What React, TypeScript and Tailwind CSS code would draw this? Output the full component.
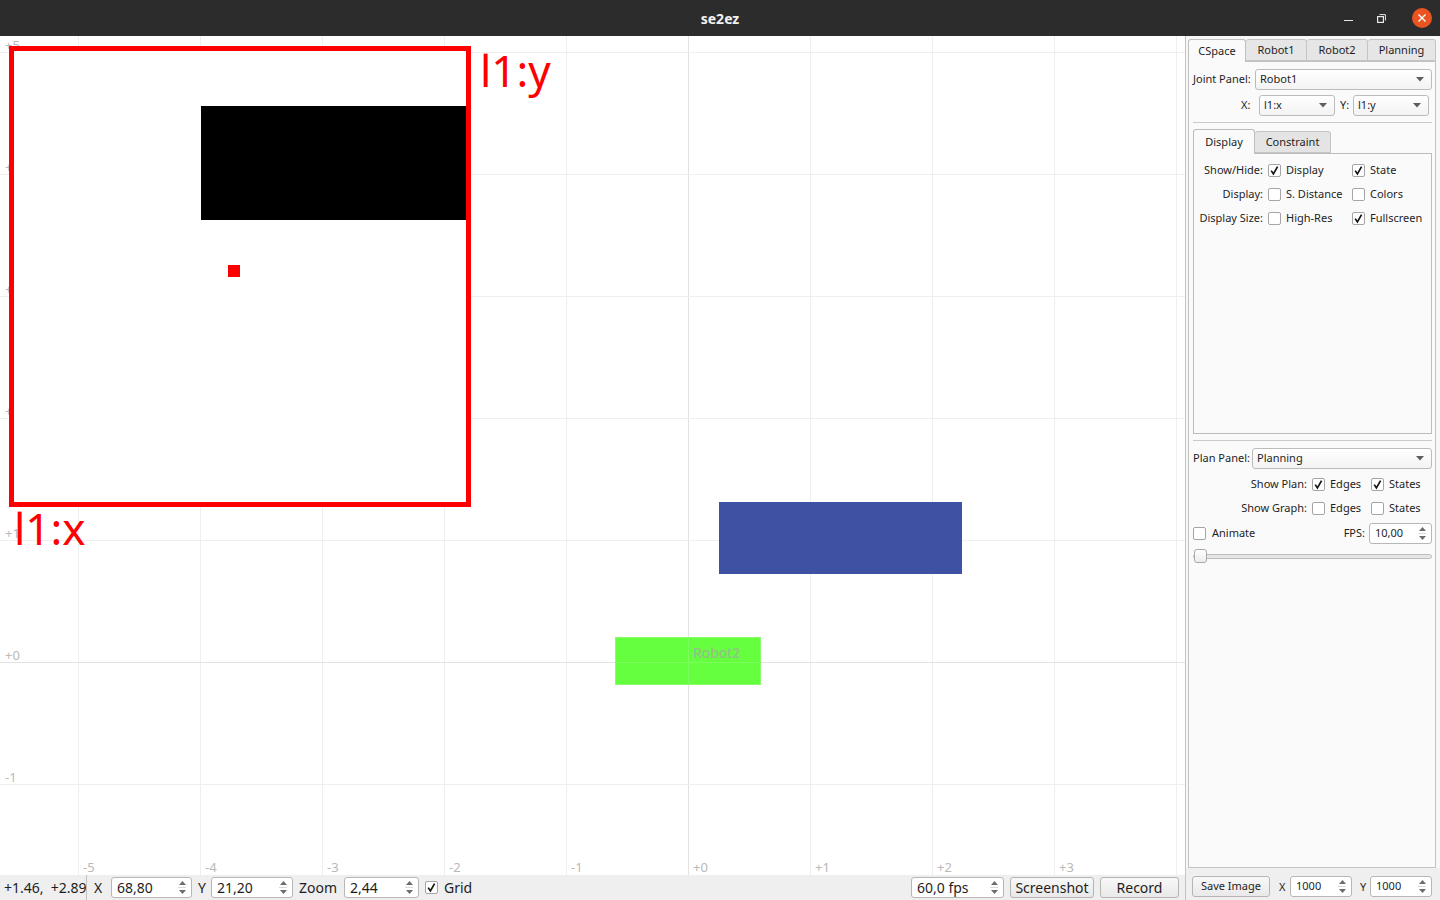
import React from "react";

function Check({ on }: { on?: boolean }) {
  return (
    <span className="flex h-[13px] w-[13px] shrink-0 items-center justify-center rounded-[2px] border border-[#a5a5a5] bg-white">
      {on && (
        <svg width="11" height="11" viewBox="0 0 11 11">
          <path d="M2.2 5.6 L4.4 8.9 L8.6 1.6" fill="none" stroke="#151515" strokeWidth="1.7" />
        </svg>
      )}
    </span>
  );
}

function Arrow() {
  return (
    <svg width="8" height="5" viewBox="0 0 8 5">
      <path d="M0 0 L8 0 L4 4.5 Z" fill="#5e5e5e" />
    </svg>
  );
}

function Combo({ text, cls }: { text: string; cls: string }) {
  return (
    <div className={`${cls} flex h-[21px] items-center justify-between rounded-[3px] border border-[#bcbcbc] bg-linear-to-b from-[#ffffff] to-[#f3f3f3] pl-[4px] pr-[7px] text-[11px] text-[#1e1e1e]`}>
      <span>{text}</span>
      <Arrow />
    </div>
  );
}

function SpinArrows() {
  return (
    <span className="flex h-full w-[14px] shrink-0 flex-col items-center justify-center gap-[2px]">
      <svg width="7" height="4" viewBox="0 0 7 4">
        <path d="M0 4 L7 4 L3.5 0 Z" fill="#6c6c6c" />
      </svg>
      <span className="h-px w-[8px] bg-[#d9d9d9]" />
      <svg width="7" height="4" viewBox="0 0 7 4">
        <path d="M0 0 L7 0 L3.5 4 Z" fill="#6c6c6c" />
      </svg>
    </span>
  );
}

function Spin({ text, cls, textCls }: { text: string; cls: string; textCls: string }) {
  return (
    <div className={`${cls} flex h-[21px] shrink-0 items-center rounded-[3px] border border-[#b7b7b7] bg-white pr-[2px]`}>
      <span className={`flex-1 pl-[5px] ${textCls}`}>{text}</span>
      <SpinArrows />
    </div>
  );
}

function Btn({ text, cls }: { text: string; cls: string }) {
  return (
    <div className={`${cls} flex h-[21px] shrink-0 items-center justify-center rounded-[3px] border border-[#b5b5b5] bg-linear-to-b from-[#f8f8f8] to-[#e9e9e9]`}>
      {text}
    </div>
  );
}

function Plot() {
  const vx = [78, 200, 322, 444, 566, 688, 810, 932, 1054, 1176];
  const hy = [16, 138, 260, 382, 504, 626, 748];
  const vl = ["+5", "+4", "+3", "+2", "+1", "+0", "-1"];
  const bl = ["-5", "-4", "-3", "-2", "-1", "+0", "+1", "+2", "+3"];
  return (
    <svg width="1185" height="839" viewBox="0 0 1185 839" className="block">
      <rect x="0" y="0" width="1185" height="839" fill="#ffffff" />
      {vx.map((x) => (
        <line key={"v" + x} x1={x + 0.5} y1="0" x2={x + 0.5} y2="839" stroke={x === 688 ? "#e2e2e2" : "#efefef"} strokeWidth="1" />
      ))}
      {hy.map((y) => (
        <line key={"h" + y} x1="0" y1={y + 0.5} x2="1185" y2={y + 0.5} stroke={y === 626 ? "#e2e2e2" : "#efefef"} strokeWidth="1" />
      ))}
      <g fontFamily="Noto Sans, sans-serif" fontSize="13" fill="#b9b9b9">
        {hy.map((y, i) => (
          <text key={"vl" + y} x="5" y={y - 2}>
            {vl[i]}
          </text>
        ))}
        {bl.map((t, i) => (
          <text key={"bl" + t} x={vx[i] + 5} y="836">
            {t}
          </text>
        ))}
      </g>
      <rect x="719" y="466" width="243" height="72" fill="#3f51a3" />
      <rect x="615.5" y="601.5" width="145" height="47" fill="#66ff3f" stroke="#86ff6a" strokeWidth="1" />
      <line x1="615" y1="626.5" x2="761" y2="626.5" stroke="#7cff5c" strokeWidth="1" />
      <line x1="688.5" y1="601" x2="688.5" y2="649" stroke="#7cff5c" strokeWidth="1" />
      <g fontFamily="Noto Sans, sans-serif" fontSize="14" fill="#a8a8a8" opacity="0.75">
        <text x="693" y="622">Robot2</text>
        <text x="693" y="622" opacity="0.45">Robot1</text>
      </g>
      <rect x="11.5" y="12.5" width="457" height="456" fill="#ffffff" stroke="#ff0000" strokeWidth="5" />
      <rect x="201" y="70" width="265" height="114" fill="#000000" />
      <rect x="228" y="229" width="12" height="12" fill="#ff0000" />
      <g fontFamily="Noto Sans, sans-serif" fontSize="44" fill="#ff0000">
        <text x="480" y="51">l1:y</text>
        <text x="14" y="509">l1:x</text>
      </g>
    </svg>
  );
}

export default function App() {
  return (
    <div className="flex h-[900px] w-[1440px] flex-col overflow-hidden bg-white font-['Noto_Sans',sans-serif] text-[#1e1e1e]">
      {/* title bar */}
      <div className="relative flex h-[36px] shrink-0 items-center justify-center bg-[#2c2c2c]">
        <span className="text-[14px] font-bold text-[#f2f2f2]">se2ez</span>
        <div className="absolute right-[8px] top-0 flex h-[36px] items-center">
          <span className="mr-[24px] mt-[5px] h-[1.5px] w-[9px] bg-[#e8e8e8]" />
          <svg width="9" height="9" viewBox="0 0 9 9" className="mr-[26px]">
            <rect x="0.6" y="2.6" width="5.8" height="5.8" fill="none" stroke="#e8e8e8" strokeWidth="1.2" />
            <path d="M2.5 0.6 H8.4 V6.5" fill="none" stroke="#e8e8e8" strokeWidth="1" />
          </svg>
          <span className="flex h-[20px] w-[20px] items-center justify-center rounded-full bg-[#e95420]">
            <svg width="10" height="10" viewBox="0 0 10 10">
              <path d="M1.5 1.5 L8.5 8.5 M8.5 1.5 L1.5 8.5" stroke="#ffffff" strokeWidth="1.4" />
            </svg>
          </span>
        </div>
      </div>

      <div className="flex min-h-0 flex-1">
        {/* left: canvas + bottom bar */}
        <div className="flex w-[1185px] shrink-0 flex-col">
          <div className="h-[839px] shrink-0 overflow-hidden">
            <Plot />
          </div>
          <div className="flex h-[25px] shrink-0 items-center bg-[#efefef] text-[14px]">
            <div className="w-[86px] overflow-hidden whitespace-pre pl-[4px]">+1.46,  +2.89</div>
            <span className="h-[25px] w-px bg-[#c2c2c2]" />
            <span className="ml-[7px] w-[17px]">X</span>
            <Spin text="68,80" cls="w-[81px]" textCls="text-[14px]" />
            <span className="ml-[6px] w-[13px]">Y</span>
            <Spin text="21,20" cls="w-[82px]" textCls="text-[14px]" />
            <span className="ml-[6px] w-[45px]">Zoom</span>
            <Spin text="2,44" cls="w-[75px]" textCls="text-[14px]" />
            <span className="ml-[6px]">
              <Check on />
            </span>
            <span className="ml-[6px]">Grid</span>
            <div className="ml-auto flex items-center gap-[6px] pr-[6px]">
              <Spin text="60,0 fps" cls="w-[93px]" textCls="text-[14px]" />
              <Btn text="Screenshot" cls="w-[84px] text-[14px]" />
              <Btn text="Record" cls="w-[79px] text-[14px]" />
            </div>
          </div>
        </div>

        {/* right panel */}
        <div className="flex w-[255px] shrink-0 flex-col border-l border-[#c3c3c3] bg-[#efefef] text-[11px]">
          <div className="flex flex-1 flex-col bg-[#f7f7f7] pl-[2px] pr-[4px] pt-[3px]">
            <div className="flex items-end">
              <div className="z-10 -mb-px flex h-[23px] w-[58px] items-center justify-center rounded-t-[3px] border border-b-0 border-[#bfbfbf] bg-[#fafafa]">CSpace</div>
              <div className="flex h-[22px] w-[61px] items-center justify-center rounded-t-[3px] border border-l-0 border-[#c4c4c4] bg-[#e6e6e6]">Robot1</div>
              <div className="flex h-[22px] w-[61px] items-center justify-center rounded-t-[3px] border border-l-0 border-[#c4c4c4] bg-[#e6e6e6]">Robot2</div>
              <div className="flex h-[22px] w-[68px] items-center justify-center rounded-t-[3px] border border-l-0 border-[#c4c4c4] bg-[#e6e6e6]">Planning</div>
            </div>
            <div className="flex flex-1 flex-col border border-[#c2c2c2] bg-[#fafafa] pl-[4px] pr-[3px] pt-[7px]">
              <div className="flex h-[21px] items-center">
                <span className="w-[62px]">Joint Panel:</span>
                <Combo text="Robot1" cls="flex-1" />
              </div>
              <div className="mt-[5px] flex h-[21px] items-center">
                <span className="ml-[48px] w-[18px]">X:</span>
                <Combo text="l1:x" cls="w-[76px]" />
                <span className="ml-[5px] w-[13px]">Y:</span>
                <Combo text="l1:y" cls="w-[76px]" />
              </div>
              <div className="mt-[6px] h-px bg-[#cacaca]" />
              <div className="mt-[6px] flex items-end">
                <div className="z-10 -mb-px flex h-[25px] w-[62px] items-center justify-center rounded-t-[3px] border border-b-0 border-[#bdbdbd] bg-[#fafafa]">Display</div>
                <div className="flex h-[22px] w-[76px] items-center justify-center rounded-t-[3px] border border-l-0 border-[#c4c4c4] bg-[#e4e4e4]">Constraint</div>
              </div>
              <div className="flex h-[281px] flex-col border border-[#bdbdbd] bg-[#fafafa] pt-[4px]">
                {[
                  ["Show/Hide:", true, "Display", true, "State"],
                  ["Display:", false, "S. Distance", false, "Colors"],
                  ["Display Size:", false, "High-Res", true, "Fullscreen"],
                ].map((r) => (
                  <div key={r[0] as string} className="flex h-[24px] items-center">
                    <span className="w-[69px] text-right">{r[0] as string}</span>
                    <div className="ml-[5px] flex w-[84px] items-center">
                      <Check on={r[1] as boolean} />
                      <span className="ml-[5px]">{r[2] as string}</span>
                    </div>
                    <Check on={r[3] as boolean} />
                    <span className="ml-[5px]">{r[4] as string}</span>
                  </div>
                ))}
              </div>
              <div className="mt-[6px] h-px bg-[#cacaca]" />
              <div className="mt-[7px] flex h-[21px] items-center">
                <span className="w-[59px]">Plan Panel:</span>
                <Combo text="Planning" cls="flex-1" />
              </div>
              {[
                ["Show Plan:", true, true],
                ["Show Graph:", false, false],
              ].map((r, i) => (
                <div key={r[0] as string} className={`${i === 0 ? "mt-[3px]" : ""} flex h-[24px] items-center`}>
                  <span className="w-[114px] text-right">{r[0] as string}</span>
                  <div className="ml-[5px] flex w-[59px] items-center">
                    <Check on={r[1] as boolean} />
                    <span className="ml-[5px]">Edges</span>
                  </div>
                  <Check on={r[2] as boolean} />
                  <span className="ml-[5px]">States</span>
                </div>
              ))}
              <div className="mt-px flex h-[24px] items-center">
                <Check />
                <span className="ml-[6px]">Animate</span>
                <span className="ml-auto mr-[4px]">FPS:</span>
                <Spin text="10,00" cls="w-[63px]" textCls="text-[11px]" />
              </div>
              <div className="relative mt-[4px] h-[14px]">
                <div className="absolute left-0 right-0 top-[5px] h-[5px] rounded-full border border-[#bdbdbd] bg-[#e6e6e6]" />
                <div className="absolute left-[1px] top-0 h-[14px] w-[13px] rounded-[3px] border border-[#a9a9a9] bg-linear-to-b from-[#ffffff] to-[#ececec]" />
              </div>
            </div>
          </div>
          <div className="flex h-[32px] shrink-0 items-start bg-[#efefef] pl-[6px] pt-[8px]">
            <Btn text="Save Image" cls="w-[78px] text-[11px]" />
            <span className="ml-[9px] mt-[3px] w-[11px]">X</span>
            <Spin text="1000" cls="w-[62px]" textCls="text-[11px]" />
            <span className="ml-[8px] mt-[3px] w-[10px]">Y</span>
            <Spin text="1000" cls="w-[62px]" textCls="text-[11px]" />
          </div>
        </div>
      </div>
    </div>
  );
}
